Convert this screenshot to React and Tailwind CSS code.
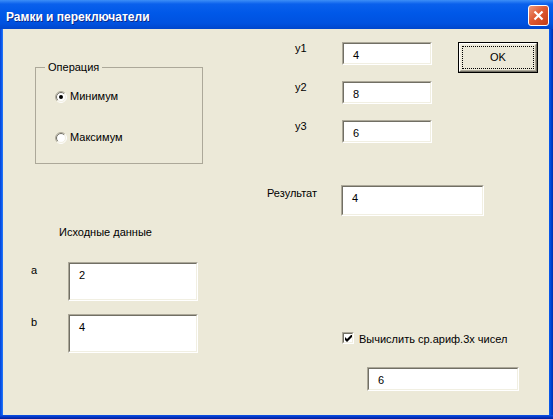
import React from 'react';

function Sunken({ className = '', children }) {
  return (
    <div className={`border border-t-[#aca899] border-l-[#aca899] border-r-white border-b-white ${className}`}>
      <div className="h-full border border-t-[#716f64] border-l-[#716f64] border-r-[#f1efe2] border-b-[#f1efe2] bg-white pl-[9px] pt-[5px]">
        {children}
      </div>
    </div>
  );
}

function Radio({ checked }) {
  return (
    <svg width="12" height="12" viewBox="0 0 12 12" className="shrink-0">
      <circle cx="6" cy="6" r="5" fill="#fff" />
      <path d="M2.111 9.889A5.5 5.5 0 0 1 9.889 2.111" fill="none" stroke="#aca899" />
      <path d="M9.889 2.111A5.5 5.5 0 0 1 2.111 9.889" fill="none" stroke="#fff" />
      <path d="M2.818 9.182A4.5 4.5 0 0 1 9.182 2.818" fill="none" stroke="#716f64" />
      <path d="M9.182 2.818A4.5 4.5 0 0 1 2.818 9.182" fill="none" stroke="#f1efe2" />
      {checked && <circle cx="6" cy="6" r="2" fill="#000" />}
    </svg>
  );
}

function Check() {
  return (
    <div className="w-[12px] h-[12px] shrink-0 border border-t-[#aca899] border-l-[#aca899] border-r-white border-b-white">
      <div className="h-full border border-t-[#716f64] border-l-[#716f64] border-r-[#f1efe2] border-b-[#f1efe2] bg-white flex items-center justify-center">
        <svg width="7" height="7" viewBox="0 0 7 7">
          <path d="M0 2L2 4L7 -1L7 2L2 7L0 5Z" fill="#000" />
        </svg>
      </div>
    </div>
  );
}

export default function App() {
  return (
    <div className="w-[553px] h-[419px] flex flex-col bg-[#0055e5] font-['Liberation_Sans',Arial,sans-serif] text-[11px] leading-[13px] text-black select-none">
      {/* title bar */}
      <div className="h-[29px] shrink-0 flex items-start justify-between pl-[6px] bg-[linear-gradient(180deg,#3d8ef7_0%,#0a60ec_14%,#0058e8_45%,#0052e0_80%,#0046cc_100%)]">
        <span className="mt-[10px] text-[12px] leading-[14px] font-bold text-white [text-shadow:1px_1px_0_#0a2a8c]">
          Рамки и переключатели
        </span>
        <div className="mt-[5px] mr-[4px] w-[21px] h-[21px] rounded-[3px] border border-white flex items-center justify-center bg-[linear-gradient(135deg,#ee9a7c_0%,#de5a32_45%,#c63d15_100%)]">
          <svg width="11" height="11" viewBox="0 0 11 11">
            <path d="M1.5 1.5L9.5 9.5M9.5 1.5L1.5 9.5" stroke="#fff" strokeWidth="2.2" />
          </svg>
        </div>
      </div>

      <div className="flex flex-1 min-h-0">
        <div className="w-[3px] bg-[linear-gradient(90deg,#0842d2,#0a5aee,#2a7cf7)]" />
        <div className="w-[546px] bg-[#ece9d8] flex">
          {/* left column */}
          <div className="w-[262px] shrink-0 flex flex-col items-start">
            <fieldset className="ml-[32px] mt-[32px] w-[168px] h-[103px] border border-[#aca899]">
              <legend className="ml-[9px] px-[3px]">Операция</legend>
              <div className="flex items-center gap-[3px] ml-[19px] mt-[16px]">
                <Radio checked />
                <span>Минимум</span>
              </div>
              <div className="flex items-center gap-[3px] ml-[19px] mt-[28px]">
                <Radio />
                <span>Максимум</span>
              </div>
            </fieldset>

            <div className="ml-[56px] mt-[62px]">Исходные данные</div>

            <div className="flex items-start mt-[23px]">
              <span className="ml-[28px] w-[37px] mt-[2px]">a</span>
              <Sunken className="w-[130px] h-[39px]">2</Sunken>
            </div>
            <div className="flex items-start mt-[13px]">
              <span className="ml-[28px] w-[37px] mt-[2px]">b</span>
              <Sunken className="w-[130px] h-[39px]">4</Sunken>
            </div>
          </div>

          {/* right column */}
          <div className="flex flex-col items-start">
            <div className="flex items-start mt-[13px]">
              <div className="flex flex-col gap-[16px]">
                <div className="flex items-start">
                  <span className="ml-[30px] w-[47px]">y1</span>
                  <Sunken className="w-[90px] h-[23px]">4</Sunken>
                </div>
                <div className="flex items-start">
                  <span className="ml-[30px] w-[47px]">y2</span>
                  <Sunken className="w-[90px] h-[23px]">8</Sunken>
                </div>
                <div className="flex items-start">
                  <span className="ml-[30px] w-[47px]">y3</span>
                  <Sunken className="w-[90px] h-[23px]">6</Sunken>
                </div>
              </div>
              <div className="ml-[26px] w-[80px] h-[31px] border border-black">
                <div className="h-full border border-t-white border-l-white border-r-[#716f64] border-b-[#716f64]">
                  <div className="h-full border border-t-[#f1efe2] border-l-[#f1efe2] border-r-[#aca899] border-b-[#aca899] p-[1px]">
                    <div className="h-full border border-dotted border-black flex items-center justify-center">
                      OK
                    </div>
                  </div>
                </div>
              </div>
            </div>

            <div className="flex items-start mt-[42px]">
              <span className="ml-[2px] w-[74px] mt-[2px]">Результат</span>
              <Sunken className="w-[143px] h-[31px]">4</Sunken>
            </div>

            <div className="flex items-start gap-[5px] ml-[77px] mt-[116px] whitespace-nowrap">
              <Check />
              <span className="mt-[1px]">Вычислить ср.ариф.3х чисел</span>
            </div>

            <Sunken className="ml-[102px] mt-[21px] w-[152px] h-[24px]">6</Sunken>
          </div>
        </div>
        <div className="w-[4px] bg-[linear-gradient(90deg,#0a5cf0,#0046d4,#0030b0)]" />
      </div>
      <div className="h-[4px] shrink-0 bg-[linear-gradient(180deg,#0a52e6,#0636c4,#001c98)]" />
    </div>
  );
}
